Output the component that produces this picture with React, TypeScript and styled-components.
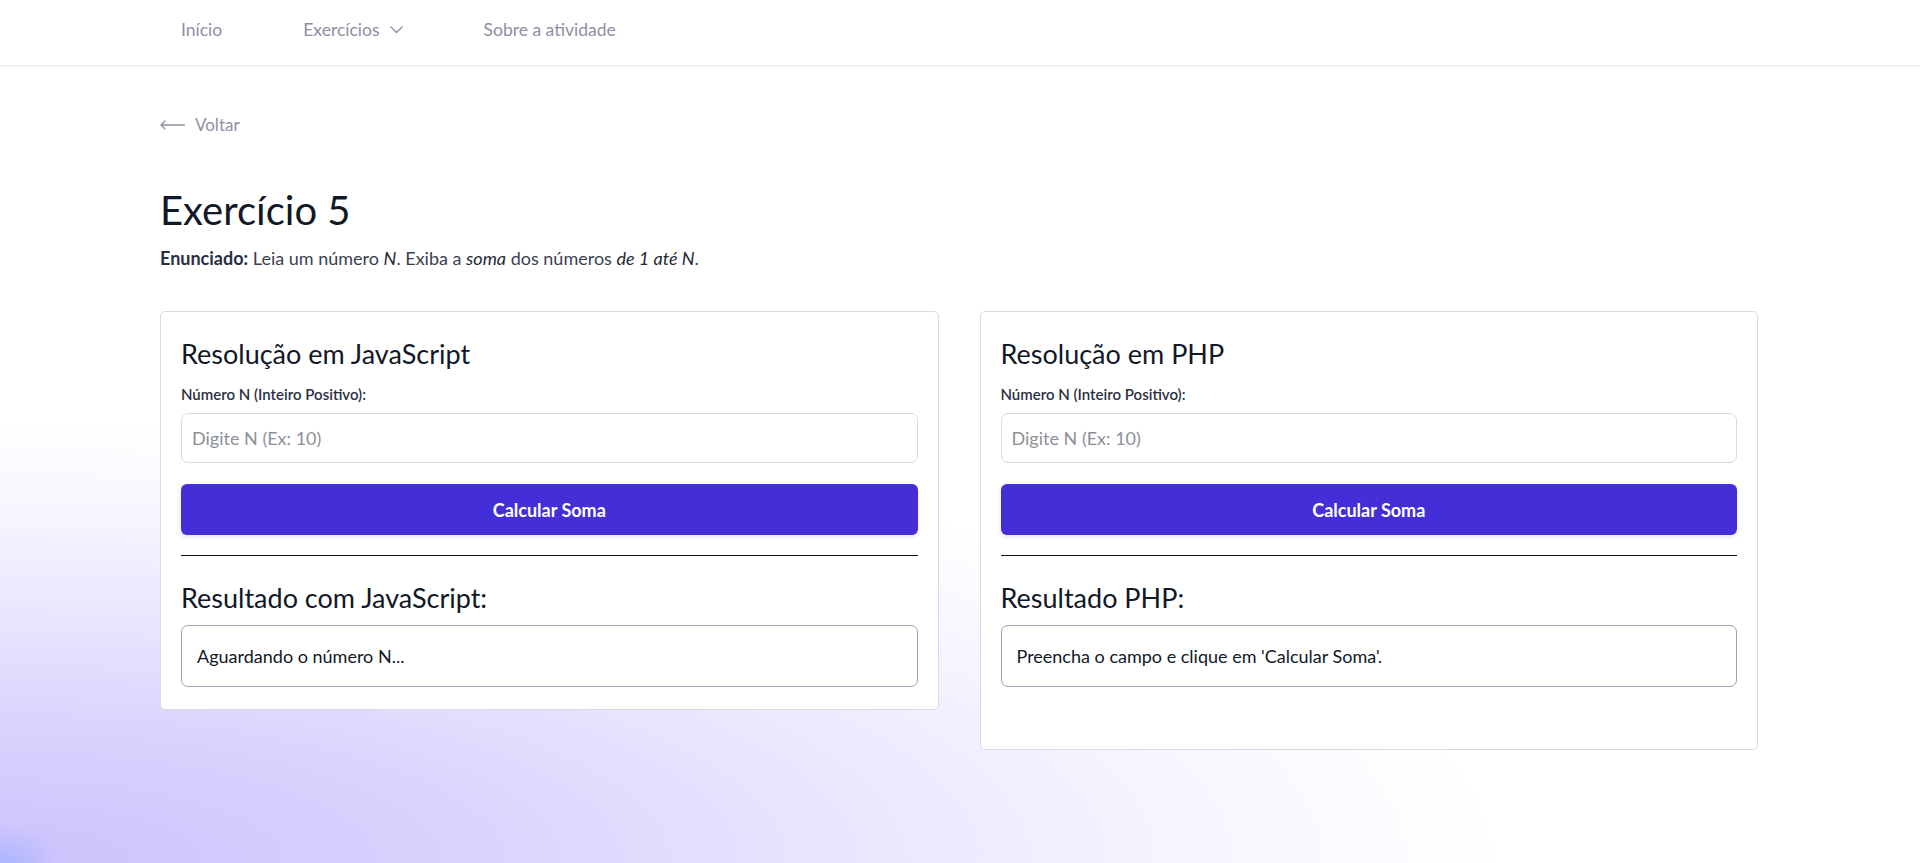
import React from "react";
import styled, { createGlobalStyle } from "styled-components";

const GlobalStyle = createGlobalStyle`
  * { box-sizing: border-box; }
  html, body { margin: 0; padding: 0; }
  body {
    font-family: "Lato", "Noto Sans", sans-serif;
    color: #111827;
    background: #ffffff;
  }
`;

const Page = styled.div`
  min-height: 100vh;
  background:
    radial-gradient(ellipse 60px 40px at 0% 100%, rgba(160, 180, 255, 0.8) 0%, rgba(160, 180, 255, 0) 100%),
    radial-gradient(ellipse 1500px 440px at 0% 100%, #cdc2fc 0%, #d9d0fd 28%, #e9e4fe 55%, #f6f4ff 78%, rgba(255, 255, 255, 0) 100%),
    #ffffff;
`;

const NavBar = styled.nav`
  height: 65px;
  background: #ffffff;
  box-shadow: 0 1px 3px rgba(0, 0, 0, 0.12);
  display: flex;
  align-items: center;
  padding-left: 181px;
`;

const NavList = styled.ul`
  display: flex;
  align-items: center;
  gap: 81px;
  list-style: none;
  margin: 0;
  padding: 0 0 6px;
`;

const NavItem = styled.li`
  display: flex;
  align-items: center;
  gap: 10px;
  font-size: 17.5px;
  color: #8f8ea3;
`;

const Main = styled.main`
  padding: 0 162px 0 160px;
`;

const BackLink = styled.a`
  display: inline-flex;
  align-items: center;
  gap: 10px;
  margin-top: 49px;
  font-size: 17px;
  color: #8f90a3;
  text-decoration: none;
`;

const Title = styled.h1`
  margin: 51px 0 0;
  font-size: 40px;
  font-weight: 400;
  line-height: 48px;
  color: #111827;
`;

const Statement = styled.p`
  margin: 14px 0 0;
  font-size: 18px;
  line-height: 20px;
  color: #3b3f52;
  b { color: #2a2f45; font-weight: 700; }
  em { color: #1f2937; }
`;

const CardsGrid = styled.div`
  display: grid;
  grid-template-columns: 1fr 1fr;
  gap: 41px;
  align-items: start;
  margin-top: 43px;
`;

const Card = styled.section<{ $extra?: number }>`
  background: #ffffff;
  border: 1px solid #d8dbe2;
  border-radius: 5px;
  padding: 26px 20px ${(p) => 22 + (p.$extra ?? 0)}px;
  display: flex;
  flex-direction: column;
`;

const CardTitle = styled.h2`
  margin: 0;
  font-size: 27px;
  font-weight: 400;
  line-height: 31px;
  color: #111827;
`;

const FieldLabel = styled.label`
  margin-top: 15px;
  font-size: 15px;
  font-weight: 600;
  line-height: 20px;
  color: #2b3042;
`;

const NumberInput = styled.input`
  margin-top: 9px;
  height: 50px;
  border: 1px solid #d6d9e0;
  border-radius: 7px;
  padding: 0 10px;
  font-family: "Lato", sans-serif;
  font-size: 18px;
  color: #111827;
  outline: none;
  &::placeholder { color: #8d9099; }
`;

const PrimaryButton = styled.button`
  margin-top: 21px;
  height: 51px;
  border: none;
  border-radius: 6px;
  background: #432ed8;
  color: #ffffff;
  font-family: "Lato", sans-serif;
  font-size: 18px;
  font-weight: 700;
  box-shadow: 0 2px 4px rgba(67, 46, 216, 0.15);
  cursor: pointer;
`;

const Divider = styled.hr`
  margin: 20px 0 0;
  border: none;
  border-top: 1.5px solid #111111;
`;

const ResultTitle = styled.h3`
  margin: 26px 0 0;
  font-size: 27px;
  font-weight: 400;
  line-height: 31px;
  color: #111827;
`;

const ResultBox = styled.div`
  margin-top: 12px;
  border: 1px solid #9aa1b1;
  border-radius: 7px;
  padding: 20px 15px;
  font-size: 18px;
  line-height: 20px;
  color: #111827;
`;

const ChevronDown = () => (
  <svg width="13" height="8" viewBox="0 0 13 8" fill="none">
    <path d="M1 1l5.5 5.5L12 1" stroke="#8f8ea3" strokeWidth="1.4" strokeLinecap="round" strokeLinejoin="round" />
  </svg>
);

const LongArrowLeft = () => (
  <svg width="25" height="10" viewBox="0 0 25 10" fill="none">
    <path d="M24.5 5H1M5 1L1 5l4 4" stroke="#8f90a3" strokeWidth="1.3" strokeLinecap="round" strokeLinejoin="round" />
  </svg>
);

type ResolutionProps = {
  title: string;
  resultTitle: string;
  message: string;
  extra?: number;
};

const ResolutionCard = ({ title, resultTitle, message, extra }: ResolutionProps) => (
  <Card $extra={extra}>
    <CardTitle>{title}</CardTitle>
    <FieldLabel>Número N (Inteiro Positivo):</FieldLabel>
    <NumberInput type="number" placeholder="Digite N (Ex: 10)" />
    <PrimaryButton type="button">Calcular Soma</PrimaryButton>
    <Divider />
    <ResultTitle>{resultTitle}</ResultTitle>
    <ResultBox>{message}</ResultBox>
  </Card>
);

export default function App() {
  return (
    <>
      <GlobalStyle />
      <Page>
        <NavBar>
          <NavList>
            <NavItem>Início</NavItem>
            <NavItem>
              Exercícios <ChevronDown />
            </NavItem>
            <NavItem>Sobre a atividade</NavItem>
          </NavList>
        </NavBar>
        <Main>
          <BackLink href="#">
            <LongArrowLeft />
            Voltar
          </BackLink>
          <Title>Exercício 5</Title>
          <Statement>
            <b>Enunciado:</b> Leia um número <em>N</em>. Exiba a <em>soma</em> dos números{" "}
            <em>de 1 até N</em>.
          </Statement>
          <CardsGrid>
            <ResolutionCard
              title="Resolução em JavaScript"
              resultTitle="Resultado com JavaScript:"
              message="Aguardando o número N..."
            />
            <ResolutionCard
              title="Resolução em PHP"
              resultTitle="Resultado PHP:"
              message="Preencha o campo e clique em 'Calcular Soma'."
              extra={40}
            />
          </CardsGrid>
        </Main>
      </Page>
    </>
  );
}
